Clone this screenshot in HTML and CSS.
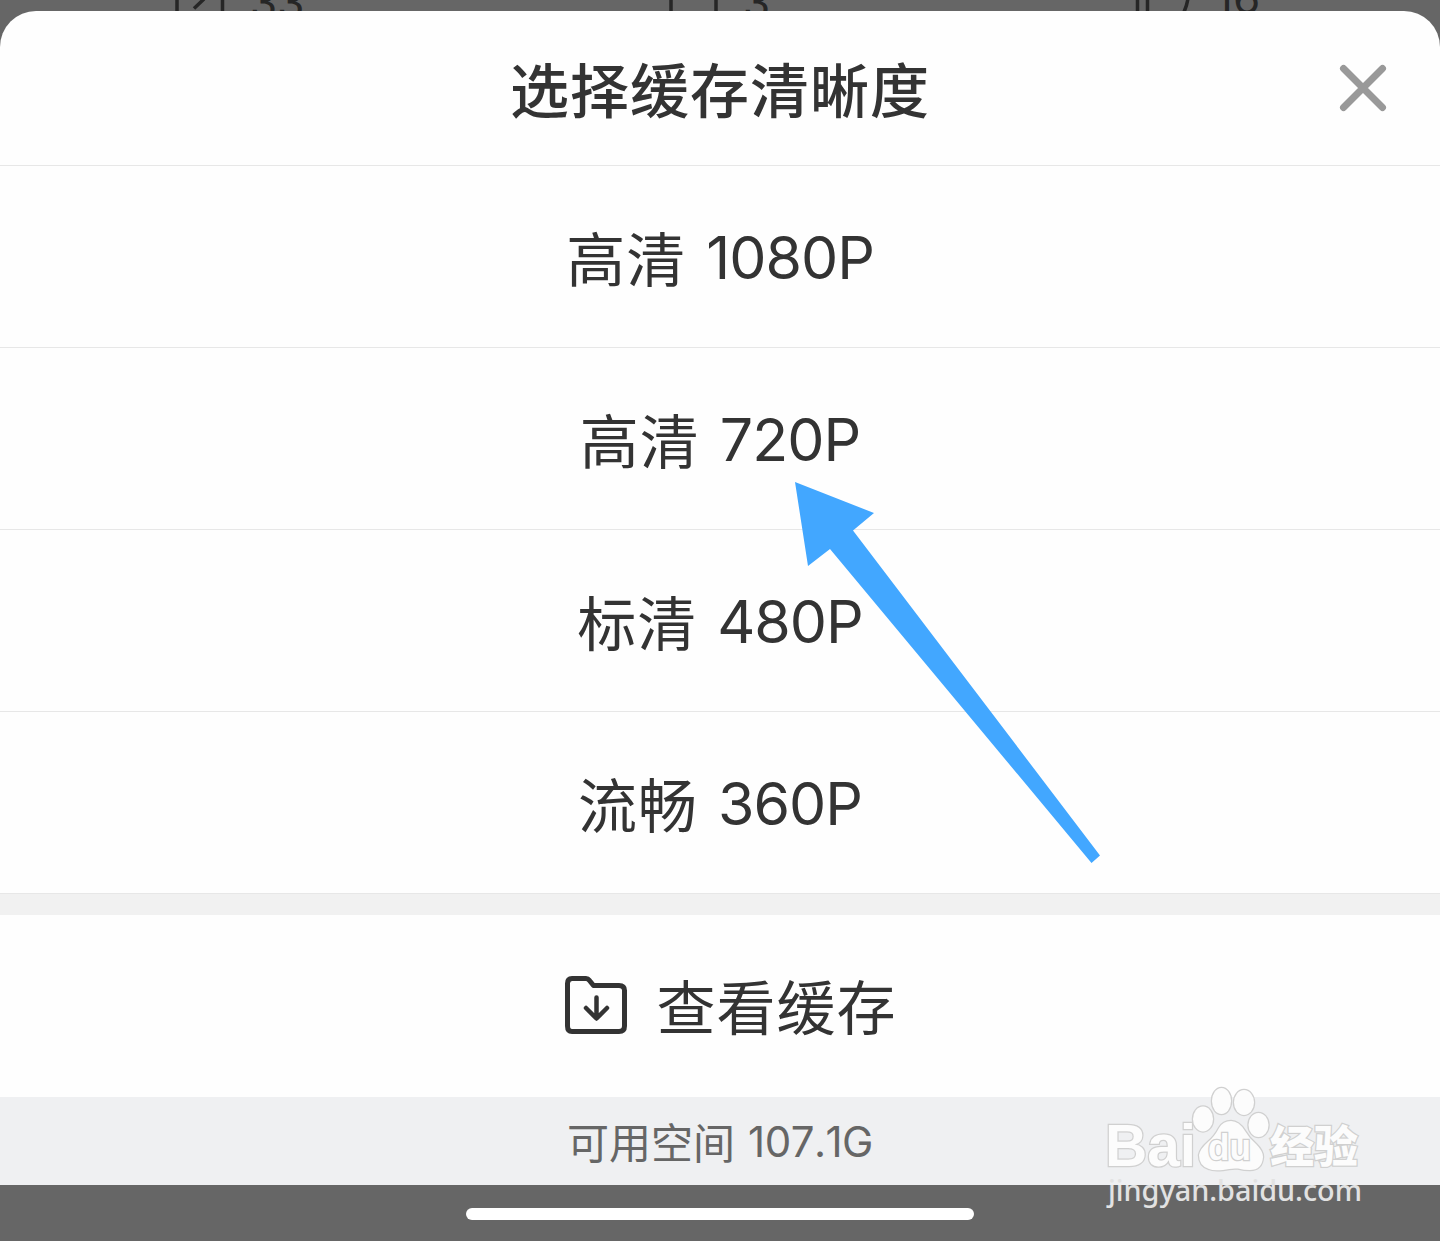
FILE: index.html
```html
<!DOCTYPE html>
<html lang="zh-CN">
<head>
    <meta charset="UTF-8">
    <title>选择缓存清晰度</title>
    <link rel="stylesheet" href="styles.css">
</head>
<body>
<div class="page">
    <!-- 被遮住的工具栏 -->
    <svg class="toolbar" width="1440" height="11" viewBox="0 0 1440 11">
        <g class="tool-icon">
            <path d="M177 -2V14M222.500 -2V14M194 8.500L204 -1"/>
            <path d="M671 -2V14M716 -2V14"/>
            <path d="M1137.500 -2V14M1147.500 -2V14M1188 -2Q1187 6 1183 14"/>
        </g>
        <g class="tool-num">
            <text x="250" y="18">33</text>
            <text x="743" y="18">3</text>
            <text x="1215" y="14">16</text>
        </g>
    </svg>
    <div class="sheet">
        <div class="head">
            <h1>选择缓存清晰度</h1>
            <svg class="close" width="50" height="50" viewBox="0 0 50 50">
                <path d="M5.500 5.500L44.500 44.500M44.500 5.500L5.500 44.500"/>
            </svg>
        </div>
        <ul class="list">
            <li>高清<span class="num">1080P</span></li>
            <li>高清<span class="num">720P</span></li>
            <li>标清<span class="num">480P</span></li>
            <li>流畅<span class="num">360P</span></li>
        </ul>
        <div class="cache">
            <svg class="folder" width="62" height="58" viewBox="0 0 62 58">
                <path d="M7 2.500H21Q23 2.500 24.500 4.500L28.500 9.500H54Q59.500 9.500 59.500 14.500V50Q59.500 55.500 54 55.500H7Q2.500 55.500 2.500 50V7.500Q2.500 2.500 7 2.500Z"/>
                <path class="down" d="M31.500 21.500V42M21 32L31.500 42.500L42 32"/>
            </svg>
            <span>查看缓存</span>
        </div>
        <div class="space">可用空间<span class="num">107.1G</span></div>
    </div>
    <div class="home"><span class="bar"></span></div>

    <svg class="arrow" width="306" height="382" viewBox="0 0 306 382">
        <path d="M0 0L79 31L58 48.500L305 373.500L296.500 381L35 67L13 84Z"/>
    </svg>

    <svg class="mark" width="270" height="130" viewBox="0 0 270 130">
        <g class="logo">
            <text class="bai" x="5" y="82" textLength="91" lengthAdjust="spacingAndGlyphs">Bai</text>
            <ellipse cx="103" cy="35" rx="10" ry="12.500"/>
            <ellipse cx="121.500" cy="17" rx="9.500" ry="13"/>
            <ellipse cx="144" cy="18.500" rx="10" ry="12.500"/>
            <ellipse cx="158.500" cy="41" rx="10" ry="12"/>
            <path d="M131 37Q139 37 145 47Q149 54 156 60Q163 67 163 73Q162 86 150 86Q144 86 138 84.500Q131 84 123 86Q113 87 109 85Q99 82 99 71Q100 65 108 58Q115 52 119 44Q123 37 131 37Z"/>
            <text class="du" x="108" y="76" textLength="43" lengthAdjust="spacingAndGlyphs">du</text>
            <text class="jy" x="170" y="78.500" textLength="88" lengthAdjust="spacingAndGlyphs">经验</text>
        </g>
        <text class="url" x="8" y="117" textLength="254" lengthAdjust="spacingAndGlyphs">jingyan.baidu.com</text>
    </svg>
</div>
</body>
</html>
```

FILE: styles.css
```css
* {
    margin: 0;
    padding: 0;
    box-sizing: border-box;
}

body {
    font-family: "Noto Sans CJK SC", sans-serif;
    color: #333;
    background: #666;
}

li {
    list-style: none;
}

.page {
    position: relative;
    width: 1440px;
    height: 1241px;
    overflow: hidden;
    background: #666;
}

.toolbar {
    display: block;
}

.tool-icon {
    fill: none;
    stroke: #262626;
    stroke-width: 3.5;
}

.tool-num {
    fill: #262626;
    font: 44px Inter, sans-serif;
}

.sheet {
    height: 1174px;
    background: #fefefe;
    border-radius: 36px 36px 0 0;
    overflow: hidden;
}

.head {
    display: flex;
    align-items: center;
    justify-content: center;
    position: relative;
    height: 155px;
    border-bottom: 1px solid #e7e7e7;
}

.head h1 {
    font-size: 59px;
    font-weight: 500;
    line-height: 88px;
    letter-spacing: 1px;
    padding-bottom: 1px;
}

.close {
    position: absolute;
    right: 52px;
    top: 52px;
    fill: none;
    stroke: #999;
    stroke-width: 7;
    stroke-linecap: round;
}

.list li {
    display: flex;
    align-items: center;
    justify-content: center;
    height: 182px;
    border-bottom: 1px solid #e7e7e7;
    font-size: 59px;
    line-height: 88px;
    letter-spacing: 1px;
}

.num {
    font-family: Inter, sans-serif;
    font-kerning: none;
    margin-left: 20px;
    padding-top: 3px;
    letter-spacing: -1px;
}

.cache {
    display: flex;
    align-items: center;
    justify-content: center;
    gap: 29px;
    height: 203px;
    padding-left: 22px;
    padding-bottom: 3px;
    border-top: 21px solid #f1f1f1;
    font-size: 59px;
    line-height: 88px;
    letter-spacing: 1px;
}

.folder {
    fill: none;
    stroke: #333;
    stroke-width: 5;
    stroke-linecap: round;
    stroke-linejoin: round;
}

.down {
    stroke-width: 4.5;
}

.space {
    display: flex;
    align-items: center;
    justify-content: center;
    height: 88px;
    padding-bottom: 1px;
    background: #eff0f2;
    color: #666;
    font-size: 42px;
    line-height: 60px;
}

.space .num {
    margin-left: 13px;
    letter-spacing: -0.5px;
}

.home {
    display: flex;
    justify-content: center;
    padding-top: 23px;
}

.bar {
    width: 508px;
    height: 12px;
    border-radius: 6px;
    background: #fff;
}

.arrow {
    position: absolute;
    left: 795px;
    top: 482px;
    fill: #42a7ff;
}

.mark {
    position: absolute;
    left: 1100px;
    top: 1084px;
}

.logo {
    fill: #fcfcfc;
    stroke: #d0d0d0;
    stroke-width: 2.5;
    paint-order: stroke;
}

.bai {
    font: bold 59px "Liberation Sans", sans-serif;
}

.du {
    font: bold 36px "Liberation Sans", sans-serif;
}

.jy {
    font: 900 44px "Noto Sans CJK SC", sans-serif;
}

.url {
    fill: #e2e2e2;
    font: 500 28px "Noto Sans", sans-serif;
}
```
